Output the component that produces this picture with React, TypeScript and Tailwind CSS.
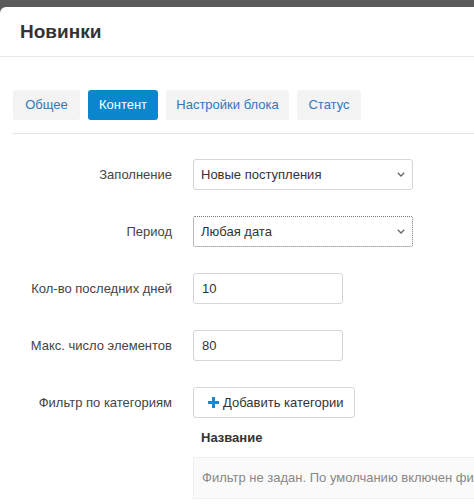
import React from "react";

function Chevron() {
  return (
    <svg width="8" height="5" viewBox="0 0 8 5" className="shrink-0">
      <path d="M0.8 0.8 L4 4 L7.2 0.8" fill="none" stroke="#666" strokeWidth="1.3" />
    </svg>
  );
}

function Row({ label, children }: { label: string; children: React.ReactNode }) {
  return (
    <div className="flex items-center h-[31px]">
      <div className="w-[172px] text-right text-[13px] text-[#444] whitespace-nowrap">{label}</div>
      <div className="ml-[21px] flex-1 min-w-0">{children}</div>
    </div>
  );
}

export default function App() {
  const tabs = [
    { t: "Общее", w: "w-[67px]" },
    { t: "Контент", w: "w-[70px]", active: true },
    { t: "Настройки блока", w: "w-[123px]" },
    { t: "Статус", w: "w-[64px]" },
  ];
  return (
    <div
      className="w-[474px] h-[504px] overflow-hidden bg-[#5b5b5b] pt-[7px]"
      style={{ fontFamily: '"Liberation Sans", Arial, sans-serif' }}
    >
      <div className="w-[760px] h-[497px] bg-white rounded-tl-[6px]">
        <div className="h-[50px] border-b border-[#e8e8e8] pl-[20px] pt-[2px] flex items-center">
          <span className="text-[19px] font-bold text-[#333]">Новинки</span>
        </div>
        <div className="pt-[33px] pl-[13px]">
          <div className="flex gap-[8px] pb-[13px] border-b border-[#e4e4e4]">
            {tabs.map((tab) => (
              <div
                key={tab.t}
                className={
                  "h-[30px] rounded-[3px] flex items-center justify-center text-[13px] " +
                  tab.w +
                  (tab.active ? " bg-[#0a86cc] text-white" : " bg-[#f3f3f3] text-[#2f78bd]")
                }
              >
                {tab.t}
              </div>
            ))}
          </div>
        </div>
        <div className="pt-[25px] flex flex-col gap-[26px]">
          <Row label="Заполнение">
            <div className="w-[220px] h-[31px] border border-[#d6d6d6] rounded-[3px] flex items-center justify-between pl-[7px] pr-[7px] text-[13px] text-[#333]">
              <span>Новые поступления</span>
              <Chevron />
            </div>
          </Row>
          <Row label="Период">
            <div className="w-[220px] h-[31px] border border-dotted border-[#777] rounded-[2px] flex items-center justify-between pl-[7px] pr-[7px] text-[13px] text-[#333]">
              <span>Любая дата</span>
              <Chevron />
            </div>
          </Row>
          <Row label="Кол-во последних дней">
            <div className="w-[150px] h-[31px] border border-[#d6d6d6] rounded-[3px] flex items-center pl-[8px] text-[13px] text-[#333]">
              10
            </div>
          </Row>
          <Row label="Макс. число элементов">
            <div className="w-[150px] h-[31px] border border-[#d6d6d6] rounded-[3px] flex items-center pl-[8px] text-[13px] text-[#333]">
              80
            </div>
          </Row>
          <div>
            <Row label="Фильтр по категориям">
              <div className="w-[162px] h-[31px] border border-[#d6d6d6] rounded-[3px] flex items-center pl-[14px] gap-[4px] text-[13px] text-[#333]">
                <svg width="11" height="11" viewBox="0 0 11 11">
                  <path d="M4 0h3v4h4v3H7v4H4V7H0V4h4z" fill="#1a87d0" />
                </svg>
                <span>Добавить категории</span>
              </div>
            </Row>
            <div className="ml-[193px] mt-[12px]">
              <div className="pl-[8px] text-[13px] font-bold text-[#333] h-[16px] flex items-center">Название</div>
              <div className="mt-[11px] h-[42px] bg-[#fafafa] border border-[#eeeeee] flex items-center pl-[8px] text-[13px] text-[#888] whitespace-nowrap">
                Фильтр не задан. По умолчанию включен фильтр по всем категориям
              </div>
            </div>
          </div>
        </div>
      </div>
    </div>
  );
}
